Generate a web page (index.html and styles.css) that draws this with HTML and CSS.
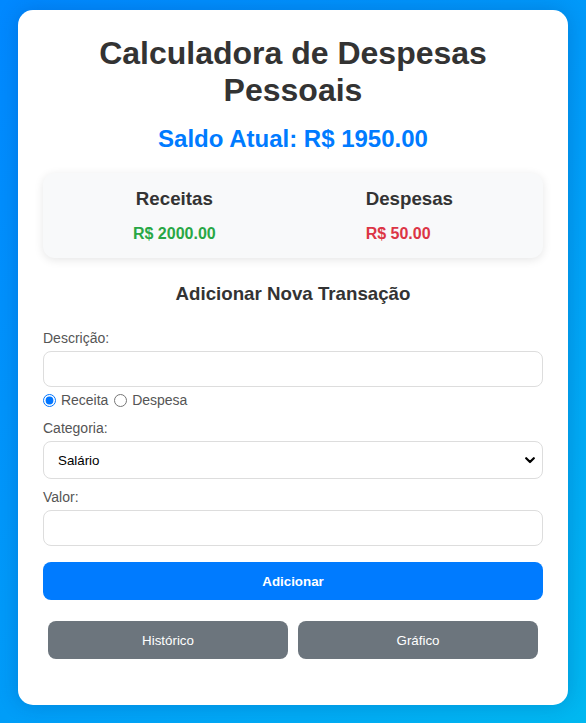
FILE: index.html
```html
<!DOCTYPE html>
<html lang="pt-BR">
<head>
<meta charset="utf-8">
<title>Calculadora de Despesas Pessoais</title>
<link rel="stylesheet" href="styles.css">
</head>
<body>
<main class="card">
  <h1 class="title">Calculadora de Despesas Pessoais</h1>
  <h2 class="balance">Saldo Atual: R$ 1950.00</h2>

  <section class="summary">
    <div class="summary-item">
      <h3 class="summary-title">Receitas</h3>
      <p class="amount income">R$ 2000.00</p>
    </div>
    <div class="summary-item">
      <h3 class="summary-title">Despesas</h3>
      <p class="amount expense">R$ 50.00</p>
    </div>
  </section>

  <form class="form">
    <h3 class="form-title">Adicionar Nova Transação</h3>

    <label class="field-label" for="desc">Descrição:</label>
    <input class="text-input" id="desc" type="text">

    <div class="type-row">
      <input class="radio" type="radio" name="tipo" id="receita" checked> <label class="radio-label" for="receita">Receita</label> <input class="radio" type="radio" name="tipo" id="despesa"> <label class="radio-label" for="despesa">Despesa</label>
    </div>

    <label class="field-label" for="cat">Categoria:</label>
    <div class="select-wrap">
      <select class="select" id="cat">
        <option>Salário</option>
      </select>
      <svg class="chevron" width="10" height="7" viewBox="0 0 10 7" aria-hidden="true"><path d="M1.2 1.2 L5 5 L8.8 1.2" fill="none" stroke="#000" stroke-width="2.2" stroke-linecap="round" stroke-linejoin="round"/></svg>
    </div>

    <label class="field-label valor-label" for="valor">Valor:</label>
    <input class="text-input" id="valor" type="number">

    <button class="btn-primary" type="button">Adicionar</button>
  </form>

  <div class="actions">
    <button class="btn-secondary" type="button">Histórico</button>
    <button class="btn-secondary" type="button">Gráfico</button>
  </div>
</main>
</body>
</html>
```

FILE: styles.css
```css
* {
  box-sizing: border-box;
}

html, body {
  margin: 0;
  height: 100%;
}

body {
  padding: 10px 0;
  font-family: "Liberation Sans", Arial, sans-serif;
  background: linear-gradient(135deg, #0088ff 0%, #009df8 55%, #00b8f0 100%);
  overflow: hidden;
}

.card {
  width: 550px;
  margin: 0 auto;
  background: #fff;
  border-radius: 15px;
  padding: 25px 25px 26px;
  box-shadow: 0 0 20px rgba(0, 40, 120, 0.22);
}

.title {
  margin: 0;
  font-size: 32px;
  font-weight: bold;
  color: #333;
  text-align: center;
}

.balance {
  margin: 16px 0 0;
  font-size: 24px;
  font-weight: bold;
  color: #007bff;
  text-align: center;
}

.summary {
  margin-top: 20px;
  display: flex;
  justify-content: space-around;
  padding: 15px;
  background: #f8f9fa;
  border-radius: 12px;
  box-shadow: 0 2px 10px rgba(0, 0, 0, 0.1);
}

.summary-item {
  text-align: center;
}

.summary-title {
  margin: 0 0 15px;
  font-size: 18.72px;
  color: #333;
}

.amount {
  margin: 0;
  font-size: 16px;
  font-weight: bold;
}

.income { color: #28a745; }
.expense { color: #dc3545; text-align: left; }

.form {
  display: flex;
  flex-direction: column;
}

.form-title {
  margin: 25px 0 25px;
  font-size: 18.72px;
  color: #333;
  text-align: center;
}

.field-label {
  display: block;
  font-size: 14px;
  color: #555;
  margin-bottom: 5px;
}

.text-input {
  display: block;
  width: 100%;
  height: 36px;
  margin: 0;
  padding: 0 10px;
  font-family: "Liberation Sans", Arial, sans-serif;
  font-size: 14px;
  border: 1px solid #ddd;
  border-radius: 8px;
  background: #fff;
}

.type-row {
  display: block;
  margin: 5px 0 12px;
  font-size: 14px;
  color: #555;
  line-height: 16px;
}

.radio {
  margin: 0 1px 0 0;
  width: 13px;
  height: 13px;
  vertical-align: -2px;
  accent-color: #0075ff;
}

.radio-label {
  margin-right: 2px;
}

.select-wrap {
  position: relative;
}

.select {
  display: block;
  width: 100%;
  height: 38px;
  margin: 0;
  padding: 0 14px;
  font-family: "Liberation Sans", Arial, sans-serif;
  font-size: 13.33px;
  color: #000;
  border: 1px solid #ddd;
  border-radius: 8px;
  background: #fff;
  appearance: none;
  -webkit-appearance: none;
}

.chevron {
  position: absolute;
  right: 8px;
  top: 16px;
  pointer-events: none;
}

.valor-label {
  margin-top: 10px;
}

.btn-primary {
  margin-top: 16px;
  height: 38px;
  border: none;
  border-radius: 8px;
  background: #007bff;
  color: #fff;
  font-family: "Liberation Sans", Arial, sans-serif;
  font-size: 13.33px;
  font-weight: bold;
}

.actions {
  display: flex;
  margin: 16px 0 15px;
}

.btn-secondary {
  flex: 1;
  margin: 5px;
  height: 38px;
  border: none;
  border-radius: 8px;
  background: #6c757d;
  color: #fff;
  font-family: "Liberation Sans", Arial, sans-serif;
  font-size: 13.33px;
}
```
